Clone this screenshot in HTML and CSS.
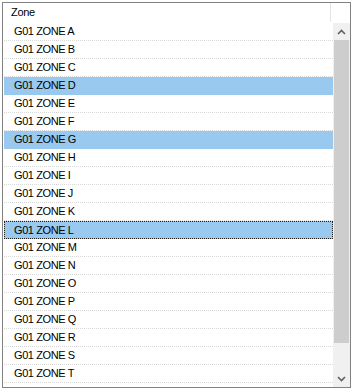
FILE: index.html
```html
<!DOCTYPE html>
<html>
<head>
<meta charset="utf-8">
<link rel="stylesheet" href="styles.css">
</head>
<body>
<div class="listview">
  <div class="header">
    <div class="col">Zone</div>
    <div class="col-rest"></div>
  </div>
  <div class="body">
    <div class="rows">
      <div class="row">G01 ZONE A</div>
      <div class="row">G01 ZONE B</div>
      <div class="row">G01 ZONE C</div>
      <div class="row sel">G01 ZONE D</div>
      <div class="row">G01 ZONE E</div>
      <div class="row">G01 ZONE F</div>
      <div class="row sel">G01 ZONE G</div>
      <div class="row">G01 ZONE H</div>
      <div class="row">G01 ZONE I</div>
      <div class="row">G01 ZONE J</div>
      <div class="row">G01 ZONE K</div>
      <div class="row sel focus">G01 ZONE L</div>
      <div class="row">G01 ZONE M</div>
      <div class="row">G01 ZONE N</div>
      <div class="row">G01 ZONE O</div>
      <div class="row">G01 ZONE P</div>
      <div class="row">G01 ZONE Q</div>
      <div class="row">G01 ZONE R</div>
      <div class="row">G01 ZONE S</div>
      <div class="row">G01 ZONE T</div>
    </div>
    <div class="vscroll">
      <div class="btn"><svg width="9" height="6" viewBox="0 0 9 6"><path d="M1 5 L4.5 1.5 L8 5" fill="none" stroke="#606060" stroke-width="1.6"/></svg></div>
      <div class="track"><div class="thumb"></div></div>
      <div class="btn"><svg width="9" height="6" viewBox="0 0 9 6"><path d="M1 1 L4.5 4.5 L8 1" fill="none" stroke="#606060" stroke-width="1.6"/></svg></div>
    </div>
  </div>
</div>
</body>
</html>
```
FILE: styles.css
```css
html, body {
  margin: 0;
  padding: 0;
  background: #ffffff;
}
body {
  font-family: "Liberation Sans", Arial, sans-serif;
  font-size: 11px;
  color: #000;
}
.listview {
  box-sizing: border-box;
  margin: 2px 0 0 2px;
  width: 349px;
  height: 386px;
  border: 1px solid #828282;
  display: flex;
  flex-direction: column;
  background: #fff;
}
.header {
  height: 20px;
  display: flex;
  flex: none;
}
.col {
  box-sizing: border-box;
  width: 328px;
  height: 19px;
  border-right: 1px solid #e5e5e5;
  padding-left: 8px;
  line-height: 19px;
  letter-spacing: -0.3px;
}
.col-rest {
  flex: 1;
}
.body {
  flex: 1;
  display: flex;
  min-height: 0;
}
.rows {
  flex: 1;
  padding-left: 1px;
  overflow: hidden;
}
.row {
  box-sizing: border-box;
  height: 18px;
  line-height: 17px;
  padding-left: 10px;
  border-bottom: 1px dotted #d8d8d8;
  letter-spacing: -0.4px;
  white-space: nowrap;
}
.row.sel {
  background: #99c9ef;
  border-bottom-color: #99c9ef;
}
.row.focus {
  border: 1px dotted #202020;
  padding-left: 9px;
  line-height: 16px;
}
.vscroll {
  width: 17px;
  flex: none;
  display: flex;
  flex-direction: column;
  background: #f0f0f0;
}
.btn {
  height: 17px;
  flex: none;
  display: flex;
  align-items: center;
  justify-content: center;
}
.track {
  flex: 1;
  display: flex;
  flex-direction: column;
}
.thumb {
  height: 303px;
  background: #cdcdcd;
  margin: 0 1px;
}
```
